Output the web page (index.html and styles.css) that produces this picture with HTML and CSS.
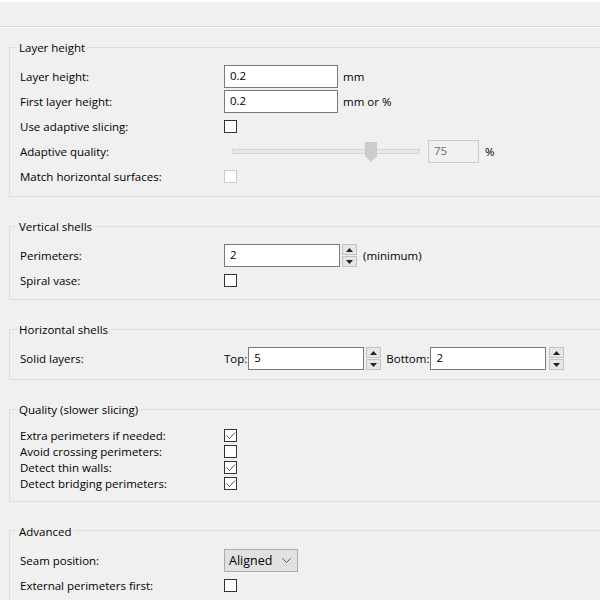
FILE: index.html
```html
<!DOCTYPE html>
<html>
<head>
<meta charset="utf-8">
<link rel="stylesheet" href="styles.css">
</head>
<body>
<div class="topstrip"></div>
<div class="toolbar"></div>
<main class="page">
  <fieldset class="group g-layer">
    <legend>Layer height</legend>
    <div class="rows">
      <div class="row"><span class="lbl">Layer height:</span><div class="ctl"><div class="input w113">0.2</div><span class="unit">mm</span></div></div>
      <div class="row"><span class="lbl">First layer height:</span><div class="ctl"><div class="input w113">0.2</div><span class="unit">mm or %</span></div></div>
      <div class="row"><span class="lbl">Use adaptive slicing:</span><div class="ctl"><span class="cb"></span></div></div>
      <div class="row"><span class="lbl">Adaptive quality:</span>
        <div class="ctl">
          <div class="slider">
            <div class="track"></div>
            <svg class="thumb" width="12" height="20" viewBox="0 0 12 20"><polygon points="0.5,0.5 11.5,0.5 11.5,14 6,19.5 0.5,14" fill="#cccccc" stroke="#c8c8c8"/></svg>
          </div>
          <div class="input disabled w50">75</div><span class="pct">%</span>
        </div>
      </div>
      <div class="row"><span class="lbl">Match horizontal surfaces:</span><div class="ctl"><span class="cb cb-disabled"></span></div></div>
    </div>
  </fieldset>

  <fieldset class="group g-vert">
    <legend>Vertical shells</legend>
    <div class="rows">
      <div class="row"><span class="lbl">Perimeters:</span>
        <div class="ctl"><div class="input w116">2</div>
          <div class="spin"><span class="sb"><svg width="7" height="4" viewBox="0 0 7 4"><polygon points="0,4 3.5,0 7,4" fill="#222"/></svg></span><span class="sb"><svg width="7" height="4" viewBox="0 0 7 4"><polygon points="0,0 7,0 3.5,4" fill="#222"/></svg></span></div>
          <span class="unit min">(minimum)</span>
        </div>
      </div>
      <div class="row"><span class="lbl">Spiral vase:</span><div class="ctl"><span class="cb"></span></div></div>
    </div>
  </fieldset>

  <fieldset class="group g-horiz">
    <legend>Horizontal shells</legend>
    <div class="rows">
      <div class="row"><span class="lbl">Solid layers:</span>
        <div class="ctl">
          <span class="pre">Top:</span><div class="input w116">5</div>
          <div class="spin"><span class="sb"><svg width="7" height="4" viewBox="0 0 7 4"><polygon points="0,4 3.5,0 7,4" fill="#222"/></svg></span><span class="sb"><svg width="7" height="4" viewBox="0 0 7 4"><polygon points="0,0 7,0 3.5,4" fill="#222"/></svg></span></div>
          <span class="pre bottom">Bottom:</span><div class="input w116">2</div>
          <div class="spin spin2"><span class="sb"><svg width="7" height="4" viewBox="0 0 7 4"><polygon points="0,4 3.5,0 7,4" fill="#222"/></svg></span><span class="sb"><svg width="7" height="4" viewBox="0 0 7 4"><polygon points="0,0 7,0 3.5,4" fill="#222"/></svg></span></div>
        </div>
      </div>
    </div>
  </fieldset>

  <fieldset class="group g-quality">
    <legend>Quality (slower slicing)</legend>
    <div class="rows tight">
      <div class="row short"><span class="lbl">Extra perimeters if needed:</span><div class="ctl"><span class="cb checked"><svg width="11" height="11" viewBox="0 0 11 11"><polyline points="1.5,5.5 4.5,8.5 10,2.5" fill="none" stroke="#555" stroke-width="1"/></svg></span></div></div>
      <div class="row short"><span class="lbl">Avoid crossing perimeters:</span><div class="ctl"><span class="cb"></span></div></div>
      <div class="row short"><span class="lbl">Detect thin walls:</span><div class="ctl"><span class="cb checked"><svg width="11" height="11" viewBox="0 0 11 11"><polyline points="1.5,5.5 4.5,8.5 10,2.5" fill="none" stroke="#555" stroke-width="1"/></svg></span></div></div>
      <div class="row short"><span class="lbl">Detect bridging perimeters:</span><div class="ctl"><span class="cb checked"><svg width="11" height="11" viewBox="0 0 11 11"><polyline points="1.5,5.5 4.5,8.5 10,2.5" fill="none" stroke="#555" stroke-width="1"/></svg></span></div></div>
    </div>
  </fieldset>

  <fieldset class="group g-adv">
    <legend>Advanced</legend>
    <div class="rows">
      <div class="row"><span class="lbl">Seam position:</span>
        <div class="ctl"><div class="select"><span>Aligned</span><svg width="9" height="5" viewBox="0 0 9 5"><polyline points="0.5,0.5 4.5,4.5 8.5,0.5" fill="none" stroke="#555" stroke-width="1"/></svg></div></div>
      </div>
      <div class="row"><span class="lbl">External perimeters first:</span><div class="ctl"><span class="cb"></span></div></div>
    </div>
  </fieldset>
</main>
</body>
</html>
```

FILE: styles.css
```css
html, body {
  margin: 0;
  padding: 0;
  overflow: hidden;
}
body {
  background: #f0f0f0;
  font-family: "Open Sans", "Noto Sans", sans-serif;
  font-size: 11.5px;
  color: #000;
  width: 600px;
  height: 600px;
}
.topstrip {
  height: 2px;
  background: #ffffff;
}
.toolbar {
  height: 24px;
  border-bottom: 1px solid #d9d9d9;
}
.page {
  border-top: 1px solid #ffffff;
  padding-left: 9px;
  overflow: hidden;
}
.group {
  margin: 21px -20px 0 0;
  padding: 10px 0 8px 10px;
  border: 1px solid #dcdcdc;
  min-width: 0;
}
.g-layer { margin-top: 11px; }
.g-vert { padding-bottom: 7px; }
.g-horiz { padding-bottom: 9px; }
.g-quality { padding-bottom: 9px; }
.group legend {
  padding: 0 2px;
  margin-left: -3px;
  line-height: 17px;
  height: 16px;
}
.rows {
  display: flex;
  flex-direction: column;
  gap: 2px;
}
.rows.tight { gap: 0.33px; }
.row {
  display: grid;
  grid-template-columns: 204px auto;
  align-items: center;
  height: 23px;
}
.row.short { height: 16px; }
.lbl { white-space: nowrap; }
.ctl {
  display: flex;
  align-items: center;
  height: 100%;
}
.input {
  box-sizing: border-box;
  height: 23px;
  background: #fff;
  border: 1px solid #7a7a7a;
  padding-left: 5px;
  line-height: 20px;
}
.w113 { width: 114px; }
.w116 { width: 116px; }
.w50 { width: 51px; }
.input.disabled {
  border-color: #cccccc;
  background: #f0f0f0;
  color: #6d6d6d;
}
.unit { margin-left: 5px; }
.unit.min { margin-left: 6px; }
.pct { margin-left: 6px; }
.pre { margin-right: 1px; }
.pre.bottom { margin-left: 5px; }
.cb {
  box-sizing: border-box;
  width: 13px;
  height: 13px;
  border: 1px solid #333333;
  background: #ffffff;
  display: flex;
  align-items: center;
  justify-content: center;
}
.cb-disabled { border-color: #cccccc; }
.spin {
  display: flex;
  flex-direction: column;
  gap: 1px;
  margin-left: 2px;
}
.spin2 { margin-left: 3px; }
.sb {
  box-sizing: border-box;
  width: 15px;
  height: 11px;
  background: #e6e6e6;
  border: 1px solid #c2c2c2;
  display: flex;
  align-items: center;
  justify-content: center;
}
.slider {
  position: relative;
  width: 188px;
  height: 23px;
  margin-left: 8px;
  margin-right: 8px;
}
.track {
  position: absolute;
  left: 0;
  right: 0;
  top: 9px;
  height: 3px;
  background: #e7e7e7;
  border: 1px solid #d6d6d6;
}
.thumb {
  position: absolute;
  left: 133px;
  top: 2px;
}
.select {
  box-sizing: border-box;
  width: 74px;
  height: 23px;
  background: #e1e1e1;
  border: 1px solid #adadad;
  display: flex;
  align-items: center;
  justify-content: space-between;
  padding: 0 6px 0 4px;
  font-size: 12.5px;
}
```
